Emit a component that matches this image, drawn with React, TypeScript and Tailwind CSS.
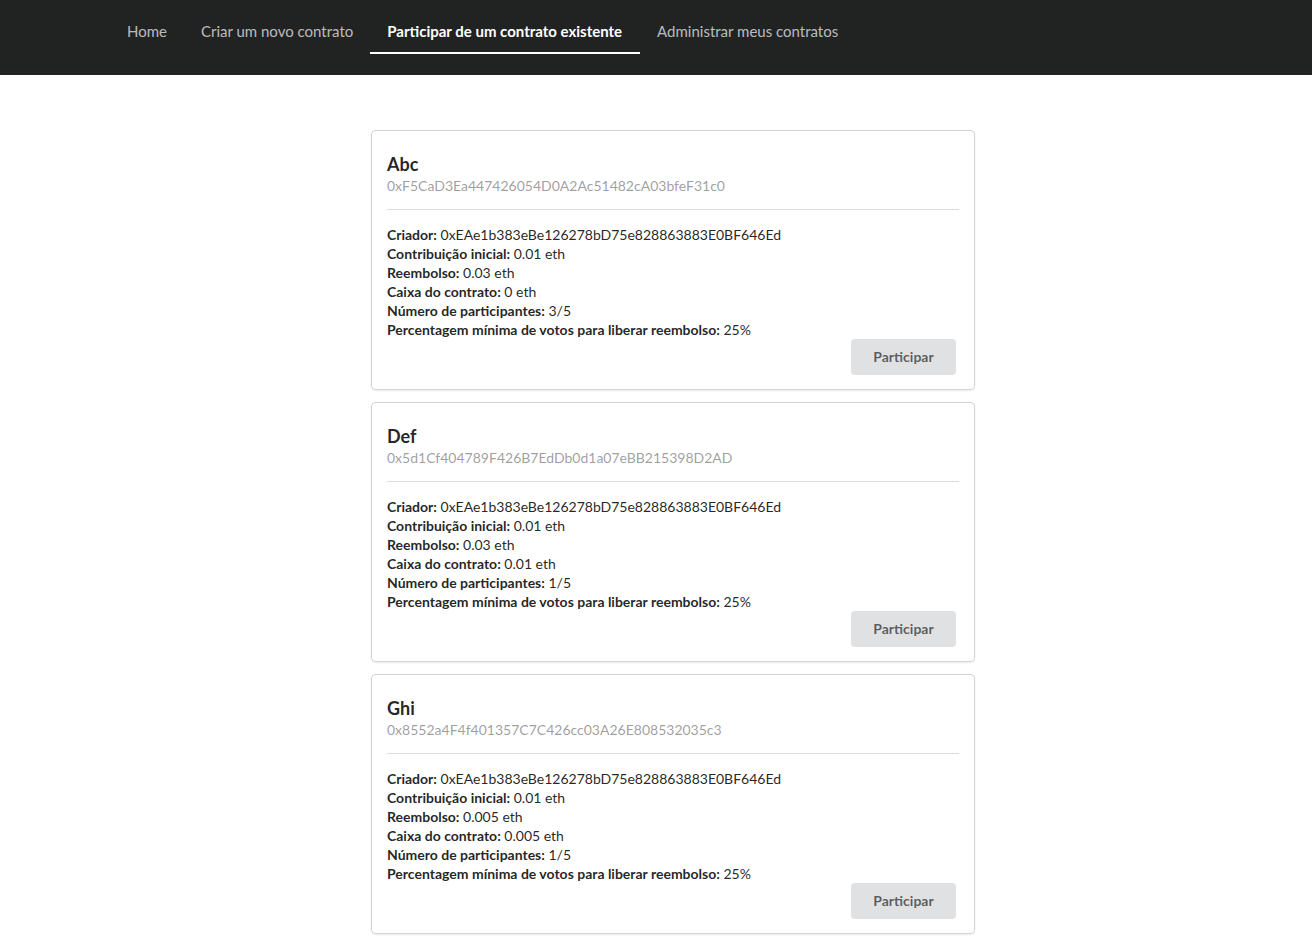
import React from 'react';

const contracts = [
  {
    name: 'Abc',
    address: '0xF5CaD3Ea447426054D0A2Ac51482cA03bfeF31c0',
    creator: '0xEAe1b383eBe126278bD75e828863883E0BF646Ed',
    initial: '0.01 eth',
    refund: '0.03 eth',
    balance: '0 eth',
    participants: '3/5',
    minVotes: '25%',
  },
  {
    name: 'Def',
    address: '0x5d1Cf404789F426B7EdDb0d1a07eBB215398D2AD',
    creator: '0xEAe1b383eBe126278bD75e828863883E0BF646Ed',
    initial: '0.01 eth',
    refund: '0.03 eth',
    balance: '0.01 eth',
    participants: '1/5',
    minVotes: '25%',
  },
  {
    name: 'Ghi',
    address: '0x8552a4F4f401357C7C426cc03A26E808532035c3',
    creator: '0xEAe1b383eBe126278bD75e828863883E0BF646Ed',
    initial: '0.01 eth',
    refund: '0.005 eth',
    balance: '0.005 eth',
    participants: '1/5',
    minVotes: '25%',
  },
];

const navItems = [
  { label: 'Home', active: false },
  { label: 'Criar um novo contrato', active: false },
  { label: 'Participar de um contrato existente', active: true },
  { label: 'Administrar meus contratos', active: false },
];

const App: React.FC = () => {
  return (
    <div className="min-h-screen bg-white text-[14px] text-[rgba(0,0,0,0.87)]" style={{ fontFamily: 'Lato, "Noto Sans", sans-serif' }}>
      {/* Top menu */}
      <div className="h-[75px] bg-[#212323] flex items-start pl-[110px]">
        {navItems.map((item) => (
          <div
            key={item.label}
            className={`h-[54px] px-[17px] flex items-center text-[15px] pt-[10px] border-b-2 ${
              item.active ? 'text-white font-bold border-white pr-[18px]' : 'text-[rgba(255,255,255,0.7)] border-transparent'
            }`}
          >
            {item.label}
          </div>
        ))}
      </div>

      {/* Contract list */}
      <div className="w-[602px] ml-[372px] pt-[56px] flex flex-col gap-[14px]">
        {contracts.map((c) => (
          <div
            key={c.address}
            className="rounded-[4px] bg-white shadow-[0_1px_3px_0_#d4d4d5,0_0_0_1px_#d4d4d5] px-[15px] pt-[22px] pb-[14px]"
          >
            <div className="text-[18px] font-bold leading-[23px] text-[rgba(0,0,0,0.87)]">{c.name}</div>
            <div className="text-[14px] leading-[19px] text-[rgba(0,0,0,0.4)]">{c.address}</div>
            <div className="h-px bg-[rgba(34,36,38,0.15)] mt-[14px] mb-[15px]" />
            <div className="leading-[19px]">
              <div><span className="font-bold">Criador:</span> {c.creator}</div>
              <div><span className="font-bold">Contribuição inicial:</span> {c.initial}</div>
              <div><span className="font-bold">Reembolso:</span> {c.refund}</div>
              <div><span className="font-bold">Caixa do contrato:</span> {c.balance}</div>
              <div><span className="font-bold">Número de participantes:</span> {c.participants}</div>
              <div><span className="font-bold">Percentagem mínima de votos para liberar reembolso:</span> {c.minVotes}</div>
            </div>
            <div className="flex justify-end pr-[3px]">
              <button className="h-[36px] w-[105px] rounded-[4px] bg-[#e0e1e2] text-[rgba(0,0,0,0.6)] font-bold text-[14px] pb-[2px]">
                Participar
              </button>
            </div>
          </div>
        ))}
      </div>
    </div>
  );
};

export default App;
